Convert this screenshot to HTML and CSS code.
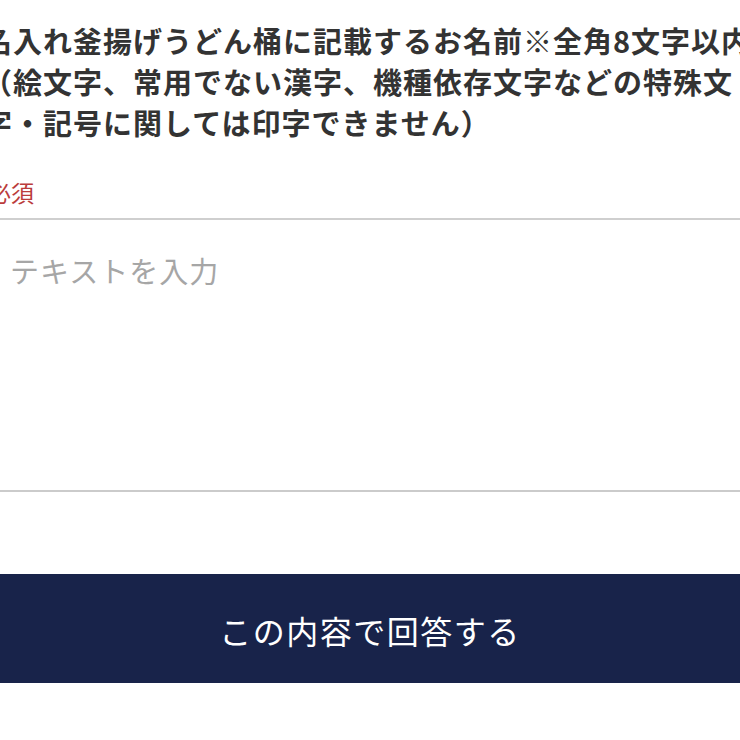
FILE: index.html
```html
<!DOCTYPE html>
<html lang="ja">
<head>
<meta charset="utf-8">
<title>お名入れ</title>
<link rel="stylesheet" href="styles.css">
</head>
<body>
<main class="form">
  <p class="question">名入れ釜揚げうどん桶に記載するお名前※全角8文字以内<br>（絵文字、常用でない漢字、機種依存文字などの特殊文<br>字・記号に関しては印字できません）</p>
  <div class="required">必須</div>
  <textarea class="answer" placeholder="テキストを入力"></textarea>
  <button class="submit" type="button">この内容で回答する</button>
</main>
</body>
</html>
```
FILE: styles.css
```css
html, body {
  margin: 0;
  padding: 0;
  width: 740px;
  height: 740px;
  overflow: hidden;
  background: #fff;
}

.form {
  display: flex;
  flex-direction: column;
  padding-top: 20px;
  font-family: "Noto Sans CJK JP", "Noto Sans", sans-serif;
}

.question {
  margin: 0 0 0 -17px;
  font-size: 29px;
  line-height: 41px;
  font-weight: 700;
  letter-spacing: 1px;
  white-space: nowrap;
  color: #333;
}

.required {
  margin: 34px 0 0 -12px;
  padding-bottom: 11px;
  font-size: 23px;
  line-height: 30px;
  color: #bb3c3c;
}

.answer {
  display: block;
  box-sizing: border-box;
  width: 740px;
  height: 274px;
  margin: 0;
  padding: 30px 10px 0;
  border: none;
  border-top: 2px solid #cfcfcf;
  border-bottom: 2px solid #cbcbcb;
  resize: none;
  outline: none;
  font-family: "Noto Sans CJK JP", "Noto Sans", sans-serif;
  font-size: 29px;
  line-height: 40px;
  letter-spacing: 1px;
  color: #333;
  background: #fff;
}

.answer::placeholder {
  color: #a6a6a6;
}

.submit {
  display: flex;
  align-items: center;
  justify-content: center;
  box-sizing: border-box;
  width: 740px;
  height: 109px;
  margin: 82px 0 0;
  padding: 2px 0 0;
  border: none;
  background: #18234a;
  color: #fff;
  font-family: "Noto Sans CJK JP", "Noto Sans", sans-serif;
  font-size: 32px;
  line-height: 44px;
  font-weight: 400;
  letter-spacing: 1.5px;
}
```
